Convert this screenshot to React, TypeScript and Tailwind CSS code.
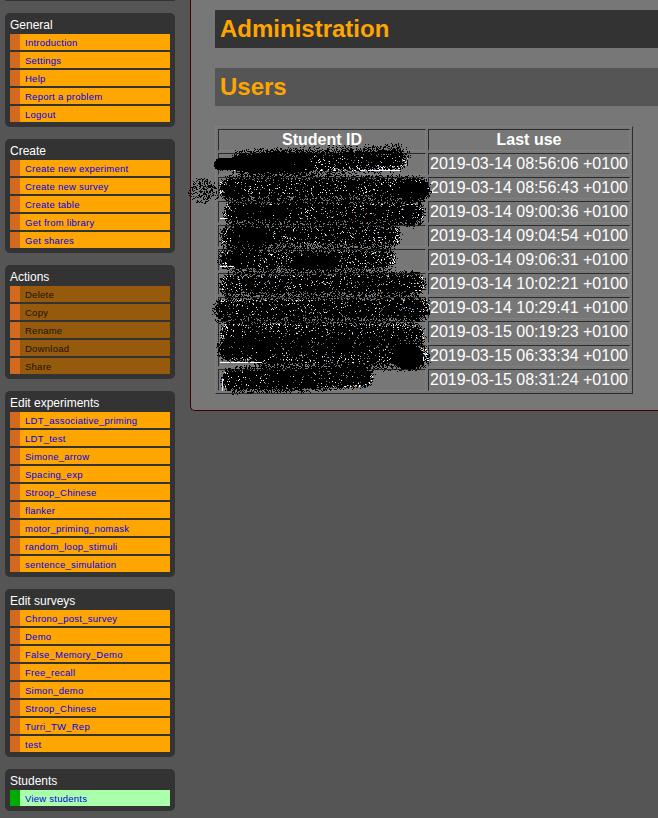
import React from "react";

type Tone = "normal" | "disabled" | "green";
type Menu = { title: string; items: string[]; tone: Tone };

const menus: Menu[] = [
  { title: "General", tone: "normal", items: ["Introduction", "Settings", "Help", "Report a problem", "Logout"] },
  {
    title: "Create",
    tone: "normal",
    items: ["Create new experiment", "Create new survey", "Create table", "Get from library", "Get shares"],
  },
  { title: "Actions", tone: "disabled", items: ["Delete", "Copy", "Rename", "Download", "Share"] },
  {
    title: "Edit experiments",
    tone: "normal",
    items: [
      "LDT_associative_priming",
      "LDT_test",
      "Simone_arrow",
      "Spacing_exp",
      "Stroop_Chinese",
      "flanker",
      "motor_priming_nomask",
      "random_loop_stimuli",
      "sentence_simulation",
    ],
  },
  {
    title: "Edit surveys",
    tone: "normal",
    items: [
      "Chrono_post_survey",
      "Demo",
      "False_Memory_Demo",
      "Free_recall",
      "Simon_demo",
      "Stroop_Chinese",
      "Turri_TW_Rep",
      "test",
    ],
  },
  { title: "Students", tone: "green", items: ["View students"] },
];

const lastUse = [
  "2019-03-14 08:56:06 +0100",
  "2019-03-14 08:56:43 +0100",
  "2019-03-14 09:00:36 +0100",
  "2019-03-14 09:04:54 +0100",
  "2019-03-14 09:06:31 +0100",
  "2019-03-14 10:02:21 +0100",
  "2019-03-14 10:29:41 +0100",
  "2019-03-15 00:19:23 +0100",
  "2019-03-15 06:33:34 +0100",
  "2019-03-15 08:31:24 +0100",
];

const tones: Record<Tone, string> = {
  normal: "border-[#d2691e] bg-[#ffa500] text-[#0000ee]",
  disabled: "border-[#d2691e] bg-[#965a0c] text-[#1a1208]",
  green: "border-[#00aa00] bg-[#aaffaa] text-[#0000ee]",
};

function MenuBox({ title, items, tone }: Menu) {
  return (
    <section className="rounded-[5px] bg-[#333] px-[5px] pb-[5px]">
      <h2 className="h-[21px] pt-[4px] text-[12px] leading-[16px] text-white">{title}</h2>
      <ul className="flex flex-col gap-[2px]">
        {items.map((item) => (
          <li
            key={item}
            className={
              "h-4 border-l-[10px] pl-[5px] pt-px text-[9.5px] leading-[16px] tracking-[0.25px] whitespace-nowrap " +
              tones[tone]
            }
          >
            {item}
          </li>
        ))}
      </ul>
    </section>
  );
}

/* Spray-can strokes that redact the ID column. Coordinates are page pixels. */
type Stroke = { pts: [number, number][]; r: number; edge: number; core: number; solid: number };
const OX = 186;
const OY = 142;
const W = 248;
const H = 256;

const strokes: Stroke[] = [
  { pts: [[220, 164.5], [250, 163]], r: 6, edge: 1, core: 1, solid: 0.9 },
  { pts: [[243, 163], [300, 163]], r: 13.5, edge: 0.2, core: 0.97, solid: 0.6 },
  { pts: [[262, 163], [345, 160], [396, 158]], r: 14, edge: 0.2, core: 0.91, solid: 0.45 },
  { pts: [[201, 191]], r: 12.5, edge: 0.35, core: 0.34, solid: 0.3 },
  { pts: [[205, 190], [225, 190]], r: 9, edge: 0.1, core: 0.25, solid: 0.3 },
  { pts: [[233, 189], [330, 188], [417, 190]], r: 14, edge: 0.3, core: 0.92, solid: 0.55 },
  { pts: [[410, 190], [419, 190]], r: 11, edge: 0.5, core: 0.9, solid: 0.6 },
  { pts: [[236, 213], [330, 212], [412, 214]], r: 13.5, edge: 0.35, core: 0.92, solid: 0.55 },
  { pts: [[246, 214], [280, 212]], r: 8, edge: 0.3, core: 0.8, solid: 0.5 },
  { pts: [[233, 237], [300, 235], [388, 236]], r: 13.5, edge: 0.35, core: 0.9, solid: 0.5 },
  { pts: [[238, 236], [262, 238]], r: 11, edge: 0.3, core: 0.9, solid: 0.6 },
  { pts: [[229, 258], [250, 257]], r: 12, edge: 0.2, core: 0.92, solid: 0.4 },
  { pts: [[240, 261], [300, 260], [383, 260]], r: 13.5, edge: 0.25, core: 0.87, solid: 0.45 },
  { pts: [[300, 262], [330, 262]], r: 10, edge: 0.2, core: 0.9, solid: 0.6 },
  { pts: [[232, 285], [320, 284], [413, 284]], r: 13, edge: 0.35, core: 0.91, solid: 0.55 },
  { pts: [[226, 311], [320, 309], [417, 309]], r: 14.5, edge: 0.2, core: 0.92, solid: 0.55 },
  { pts: [[233, 334], [320, 333], [412, 336]], r: 13.5, edge: 0.35, core: 0.92, solid: 0.55 },
  { pts: [[229, 349], [262, 349]], r: 12.5, edge: 0.4, core: 0.96, solid: 0.65 },
  { pts: [[250, 344], [360, 345]], r: 10, edge: 0.3, core: 0.75, solid: 0.5 },
  { pts: [[265, 356], [330, 355], [416, 357]], r: 14.5, edge: 0.2, core: 0.9, solid: 0.45 },
  { pts: [[405, 357], [410, 358]], r: 13, edge: 0.3, core: 1, solid: 0.8 },
  { pts: [[234, 380], [300, 379], [361, 375]], r: 13.5, edge: 0.3, core: 0.95, solid: 0.6 },
];

function segDist(x: number, y: number, a: [number, number], b: [number, number]) {
  const dx = b[0] - a[0];
  const dy = b[1] - a[1];
  const l = dx * dx + dy * dy;
  const t = l ? Math.max(0, Math.min(1, ((x - a[0]) * dx + (y - a[1]) * dy) / l)) : 0;
  return Math.hypot(x - a[0] - t * dx, y - a[1] - t * dy);
}

const speckColors = ["#ffffff", "#ffd9a0", "#8ecbf2", "#e08a80", "#8080d0"];

function spray() {
  let seed = 20190314;
  const rnd = () => {
    seed = (Math.imul(seed, 1664525) + 1013904223) >>> 0;
    return seed / 4294967296;
  };
  let black = "";
  const specks = speckColors.map(() => "");
  for (let y = 0; y < H; y++) {
    let run = 0;
    for (let x = 0; x <= W; x++) {
      const px = x + OX + 0.5;
      const py = y + OY + 0.5;
      let miss = 1;
      let near = 9;
      if (x < W) {
        for (const s of strokes) {
          let d = 99;
          for (let i = 0; i < s.pts.length; i++) {
            d = Math.min(d, segDist(px, py, s.pts[i], s.pts[Math.min(i + 1, s.pts.length - 1)]));
          }
          const q = d / s.r;
          if (q > 1.08) continue;
          near = Math.min(near, q);
          const p = q < s.solid ? s.core : s.core + (s.edge - s.core) * Math.min(1, (q - s.solid) / (1 - s.solid));
          miss *= 1 - (q > 1 ? p * 0.4 : p);
        }
      }
      const hit = rnd() > miss;
      if (hit) run++;
      if (!hit || x === W) {
        if (run) black += `M${x - run} ${y}h${run}v1h-${run}z`;
        run = 0;
        const inText = (py - 153) % 24 > 3 && (py - 153) % 24 < 18 && px > 220;
        if (near < 0.9 && inText && x < W && rnd() < 0.5) {
          const k = rnd();
          const c = k < 0.55 ? 0 : k < 0.7 ? 1 : k < 0.85 ? 2 : k < 0.93 ? 3 : 4;
          specks[c] += `M${x} ${y}h1v1h-1z`;
        }
      }
    }
  }
  return { black, specks };
}

const paint = spray();

function Redaction() {
  return (
    <svg
      className="pointer-events-none absolute top-[16px] left-[-29px]"
      width={W}
      height={H}
      viewBox={`0 0 ${W} ${H}`}
      shapeRendering="crispEdges"
      aria-hidden="true"
    >
      <path d={paint.black} fill="#000" />
      {paint.specks.map((d, i) => (
        <path key={i} d={d} fill={speckColors[i]} />
      ))}
      <path
        d="M182 28h32v1h-32zM174 28h5v1h-5zM34 124h7v1h-7zM43 124h5v1h-5zM34 220h10v1h-10zM45 220h17v1h-17zM64 220h12v1h-12zM34 76h7v1h-7z"
        fill="#fff"
      />
      <path d="M36 237h1v12h-1z" fill="#dde0ff" />
    </svg>
  );
}

const cell =
  "h-[22px] border border-t-[#2c2c2c] border-l-[#2c2c2c] border-r-[#808080] border-b-[#808080] p-px text-[16px] leading-[18px] whitespace-nowrap";

export default function App() {
  return (
    <div className="flex h-[818px] w-[658px] items-start overflow-hidden bg-[#555] font-['Liberation_Sans',Arial,sans-serif]">
      <nav className="flex w-[190px] shrink-0 flex-col gap-3 pr-[15px] pl-[5px]">
        <div className="h-px rounded-b-[5px] bg-[#333]" />
        {menus.map((m) => (
          <MenuBox key={m.title} {...m} />
        ))}
      </nav>
      <main className="h-[411px] w-[480px] shrink-0 rounded-bl-[5px] border-b border-l border-[#400000] bg-[#777] pt-[10px] pl-[24px] text-white">
        <h1 className="mb-5 h-[38px] bg-[#333] pl-[5px] text-[24px] leading-[38px] font-bold text-[#ffa500]">
          Administration
        </h1>
        <h2 className="mb-5 h-[38px] bg-[#555] pl-[5px] text-[24px] leading-[38px] font-bold text-[#ffa500]">Users</h2>
        <div className="relative w-[418px]">
          <table className="w-[418px] table-fixed border-separate border-spacing-[2px] border border-t-[#808080] border-r-[#2c2c2c] border-b-[#2c2c2c] border-l-[#808080]">
            <colgroup>
              <col className="w-[208px]" />
              <col className="w-[202px]" />
            </colgroup>
            <thead>
              <tr>
                <th className={cell}>Student ID</th>
                <th className={cell}>Last use</th>
              </tr>
            </thead>
            <tbody>
              {lastUse.map((t) => (
                <tr key={t}>
                  <td className={cell} />
                  <td className={cell}>{t}</td>
                </tr>
              ))}
            </tbody>
          </table>
          <Redaction />
        </div>
      </main>
    </div>
  );
}
